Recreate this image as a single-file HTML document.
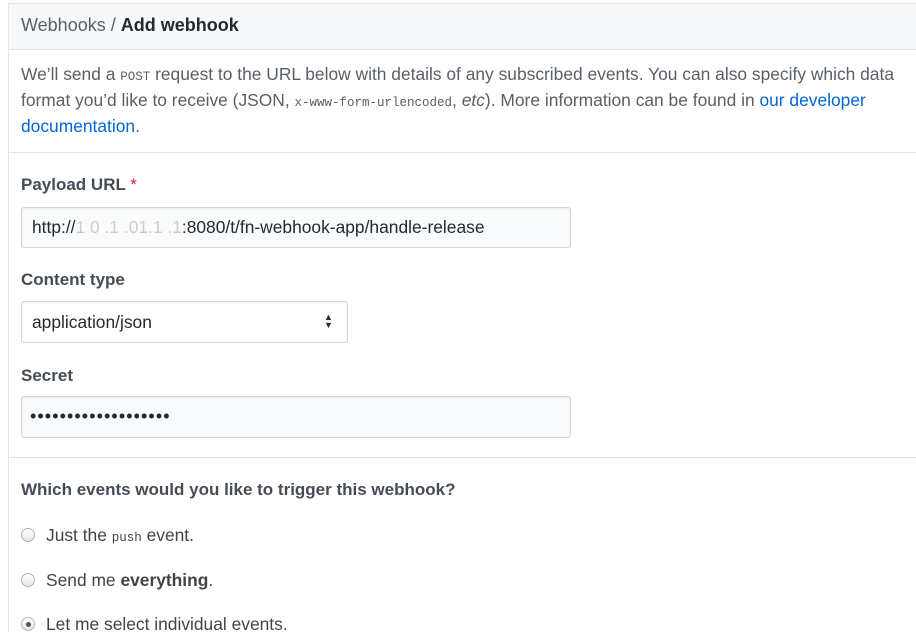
<!DOCTYPE html>
<html><head><meta charset="utf-8"><style>
html,body{margin:0;width:916px;height:632px;overflow:hidden;}
body{position:relative;background:#fff;font-family:"Liberation Sans",sans-serif;color:#24292e;}
.box{position:absolute;left:8px;top:3px;width:908px;height:640px;border-left:1px solid #e1e4e8;border-top:1px solid #e1e4e8;}
.hdr{position:absolute;left:0;top:0;right:0;height:45px;background:#f6f8fa;border-bottom:1px solid #e1e4e8;}
.t{position:absolute;white-space:nowrap;font-size:17.4px;}
.mono{font-family:"Liberation Mono",monospace;font-size:12.5px;}
a{color:#0366d6;text-decoration:none}
.sep{position:absolute;left:8px;width:908px;height:1px;background:#e1e4e8}
.inp{position:absolute;left:21px;border:1px solid #d1d5da;border-radius:3px;background:#fafbfc;box-shadow:inset 0 1px 2px rgba(27,31,35,.075);box-sizing:border-box}
.lab{font-weight:bold;color:#444d56;font-size:17px}
.rad{position:absolute;left:21px;width:14px;height:14px;border-radius:50%;border:1px solid #b3b3b3;background:linear-gradient(#fff,#e6e6e6);box-sizing:border-box}
</style></head><body>
<div class="box"><div class="hdr"></div></div>
<div class="t" style="left:21px;top:15px;color:#586069;font-size:18px">Webhooks / <b style="color:#24292e">Add webhook</b></div>
<div class="t" style="left:21px;top:64px;color:#586069">We’ll send a <span class="mono">POST</span> request to the URL below with details of any subscribed events. You can also specify which data</div>
<div class="t" style="left:21px;top:90px;color:#586069">format you’d like to receive (JSON, <span class="mono">x-www-form-urlencoded</span>, <i>etc</i>). More information can be found in <a>our developer</a></div>
<div class="t" style="left:21px;top:116px;color:#586069"><a>documentation</a>.</div>
<div class="sep" style="top:152px"></div>
<div class="t lab" style="left:21px;top:175px">Payload URL <span style="color:#cb2431;font-weight:normal">*</span></div>
<div class="inp" style="top:207px;width:550px;height:41px"></div>
<div class="t" style="left:32px;top:217px">http://<span style="color:#ccc">1 0 .1 .01.1 .1</span>:8080/t/fn-webhook-app/handle-release</div>
<div class="t lab" style="left:21px;top:270px">Content type</div>
<div class="inp" style="top:301px;width:327px;height:42px;background:#fff"></div>
<div class="t" style="left:32px;top:312px">application/json</div>
<div class="t" style="left:324px;top:313px;font-size:9px;line-height:8px">▲<br>▼</div>
<div class="t lab" style="left:21px;top:366px">Secret</div>
<div class="inp" style="top:396px;width:550px;height:42px"></div>
<div class="t" style="left:30px;top:406px;font-size:18px;letter-spacing:1.1px">•••••••••••••••••••</div>
<div class="sep" style="top:457px"></div>
<div class="t lab" style="left:21px;top:480px">Which events would you like to trigger this webhook?</div>
<div class="rad" style="top:528px"></div>
<div class="t" style="left:46px;top:525px;color:#444">Just the <span class="mono">push</span> event.</div>
<div class="rad" style="top:573px"></div>
<div class="t" style="left:46px;top:570px;color:#444">Send me <b>everything</b>.</div>
<div class="rad" style="top:617px"><div style="position:absolute;left:3.5px;top:3.5px;width:5px;height:5px;border-radius:50%;background:#555"></div></div>
<div class="t" style="left:46px;top:614px;color:#444">Let me select individual events.</div>
</body></html>
